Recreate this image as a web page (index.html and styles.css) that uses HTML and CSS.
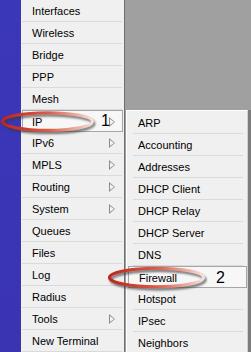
FILE: index.html
```html
<!DOCTYPE html>
<html lang="en">
<head>
    <meta charset="UTF-8">
    <title>WinBox menu</title>
    <link rel="stylesheet" href="styles.css">
</head>
<body>
    <div class="screen">
        <!-- Side strip -->
        <div class="strip"></div>

        <!-- Main menu -->
        <ul class="menu">
            <li>Interfaces</li>
            <li>Wireless</li>
            <li>Bridge</li>
            <li>PPP</li>
            <li>Mesh</li>
            <li class="active has-sub">IP</li>
            <li class="has-sub">IPv6</li>
            <li class="has-sub">MPLS</li>
            <li class="has-sub">Routing</li>
            <li class="has-sub">System</li>
            <li>Queues</li>
            <li>Files</li>
            <li>Log</li>
            <li>Radius</li>
            <li class="has-sub">Tools</li>
            <li>New Terminal</li>
        </ul>

        <!-- Work area with IP submenu -->
        <div class="workarea">
            <ul class="submenu">
                <li>ARP</li>
                <li>Accounting</li>
                <li>Addresses</li>
                <li>DHCP Client</li>
                <li>DHCP Relay</li>
                <li>DHCP Server</li>
                <li>DNS</li>
                <li class="active">Firewall</li>
                <li>Hotspot</li>
                <li>IPsec</li>
                <li>Neighbors</li>
            </ul>
        </div>

        <!-- Annotations drawn over the screenshot -->
        <svg class="marks" width="251" height="352" viewBox="0 0 251 352">
            <defs>
                <linearGradient id="ring" x1="0" y1="0" x2="1" y2="0">
                    <stop offset="0" stop-color="#c0241a"/>
                    <stop offset="0.5" stop-color="#dc5a46"/>
                    <stop offset="0.85" stop-color="#eeb4a8"/>
                    <stop offset="1" stop-color="#f6e2dc"/>
                </linearGradient>
                <filter id="soft" x="-10%" y="-50%" width="120%" height="200%">
                    <feGaussianBlur stdDeviation="0.9"/>
                </filter>
            </defs>
            <ellipse cx="49" cy="123.8" rx="45" ry="8.8" fill="none" stroke="#3a3a3a" stroke-width="3" opacity="0.7" filter="url(#soft)"/>
            <ellipse cx="47.5" cy="121.5" rx="45" ry="8.8" fill="none" stroke="url(#ring)" stroke-width="3"/>
            <ellipse cx="158" cy="279.8" rx="47" ry="9.2" fill="none" stroke="#3a3a3a" stroke-width="3" opacity="0.7" filter="url(#soft)"/>
            <ellipse cx="156.5" cy="277.5" rx="47" ry="9.2" fill="none" stroke="url(#ring)" stroke-width="3"/>
        </svg>
        <span class="num num-1">1</span>
        <span class="num num-2">2</span>
    </div>
</body>
</html>
```

FILE: styles.css
```css
/* General */
body {
    margin: 0;
    font-family: 'Liberation Sans', Arial, sans-serif;
    font-size: 11px;
    color: #000;
}

.screen {
    position: relative;
    display: flex;
    width: 251px;
    height: 352px;
    overflow: hidden;
    background-color: #f0f0f0;
}

.strip {
    width: 21px;
    flex-shrink: 0;
    background: linear-gradient(#3b37b9, #3a34b3);
}

/* Menus */
ul {
    list-style: none;
    margin: 0;
    padding: 0;
}

.menu {
    width: 103px;
    flex-shrink: 0;
    background-color: #f0f0f0;
}

.menu li,
.submenu li {
    position: relative;
    height: 21px;
    line-height: 23px;
    border-bottom: 1px solid #dadada;
    padding-left: 10px;
    white-space: nowrap;
}

.menu li {
    margin-left: 1px;
    margin-right: 2px;
}

.menu li.active,
.submenu li.active {
    height: 20px;
    line-height: 22px;
    border: 1px solid #a6a6a6;
    background-color: #f7f7f7;
    padding-left: 9px;
}

.menu li.active {
    margin-left: 1px;
    margin-right: 1px;
}

/* Submenu arrow: gray triangle with a light inside */
.has-sub::before,
.has-sub::after {
    content: "";
    position: absolute;
    width: 0;
    height: 0;
    border-style: solid;
    border-color: transparent;
}

.has-sub::before {
    right: 7px;
    top: 6px;
    border-width: 5px 0 5px 6px;
    border-left-color: #8c8c8c;
}

.has-sub::after {
    right: 8px;
    top: 8px;
    border-width: 3px 0 3px 4px;
    border-left-color: #f4f4f4;
}

/* Right work area */
.workarea {
    flex: 1;
    background-color: #a0a0a0;
    border-left: 1px solid #6e6e6e;
    padding-top: 110px;
    padding-left: 1px;
}

.submenu {
    width: 120px;
    height: 100%;
    background-color: #f0f0f0;
    border-top: 1px solid #fff;
    border-left: 1px solid #fff;
    border-right: 1px solid #d0d0d0;
    padding-top: 1px;
    box-shadow: 3px 0 0 #7c7c7c;
}

.submenu li {
    margin: 0 4px 0 6px;
    padding-left: 5px;
}

.submenu li.active {
    margin: 0 0 0 1px;
    padding-left: 10px;
}

/* Annotations */
.marks {
    position: absolute;
    left: 0;
    top: 0;
}

.num {
    position: absolute;
    font-size: 16px;
    line-height: 16px;
}

.num-1 {
    left: 101px;
    top: 113px;
}

.num-2 {
    left: 216px;
    top: 270px;
}
```
